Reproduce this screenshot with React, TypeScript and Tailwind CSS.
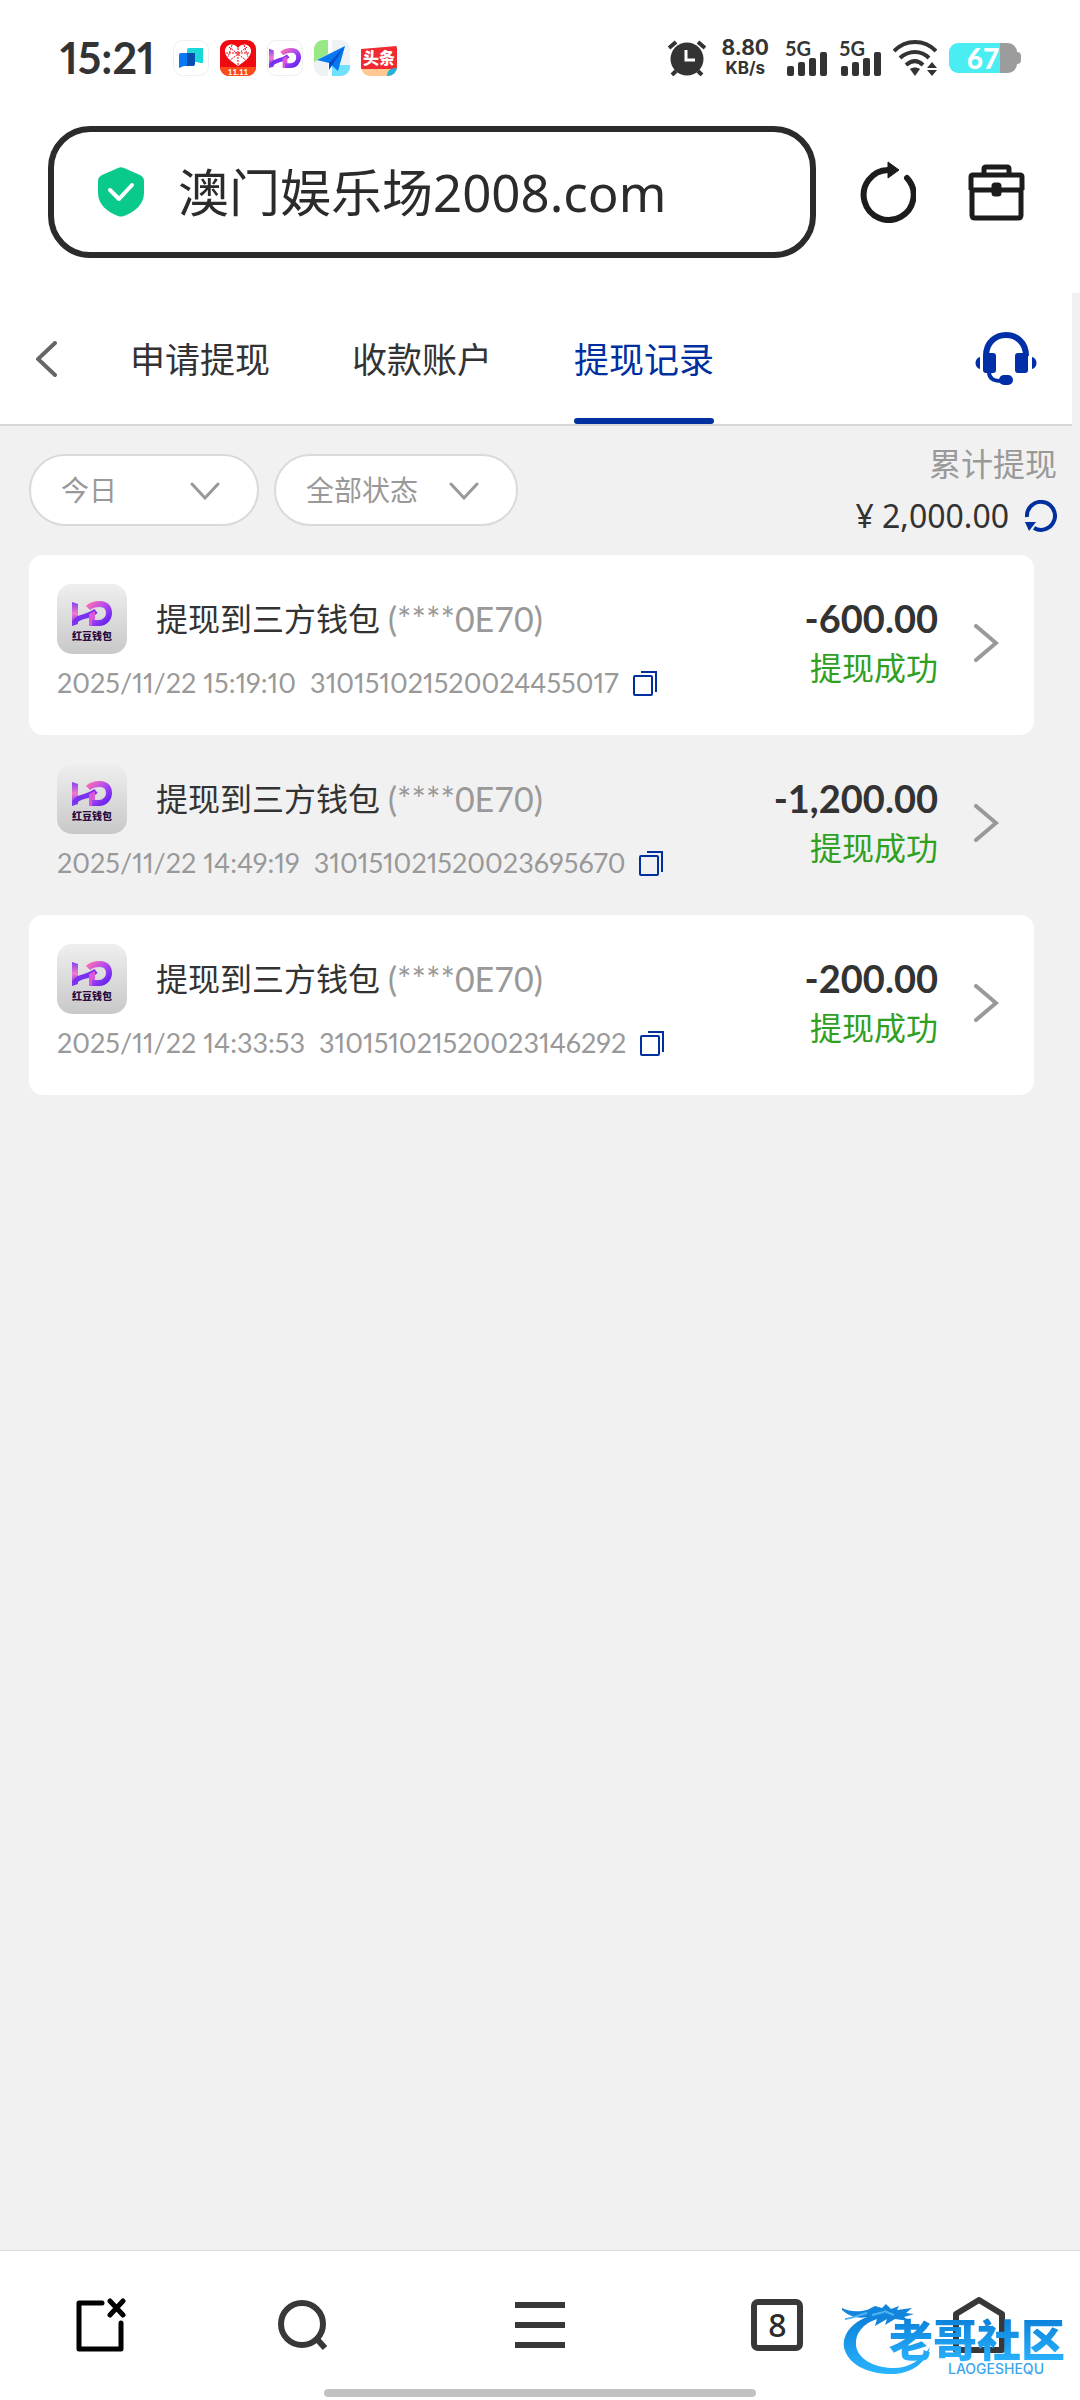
import React from 'react';

interface WithdrawRecord {
  id: string;
  time: string;
  amount: string;
}

const records: WithdrawRecord[] = [
  { id: '310151021520024455017', time: '2025/11/22 15:19:10', amount: '-600.00' },
  { id: '310151021520023695670', time: '2025/11/22 14:49:19', amount: '-1,200.00' },
  { id: '310151021520023146292', time: '2025/11/22 14:33:53', amount: '-200.00' },
];

const tabs = ['申请提现', '收款账户', '提现记录'];

// HD wallet mark, shared by the status bar and the record rows
const HdMark: React.FC<{ className?: string }> = ({ className }) => (
  <svg viewBox="0 0 40 25" className={className} fill="none" aria-hidden="true">
    <defs>
      <linearGradient id="hdLeft" x1="0" y1="0" x2="0" y2="25" gradientUnits="userSpaceOnUse">
        <stop offset="0" stopColor="#7a3cf0" />
        <stop offset="0.5" stopColor="#f07ad0" />
        <stop offset="1" stopColor="#6a2cf0" />
      </linearGradient>
      <linearGradient id="hdRight" x1="16" y1="2" x2="36" y2="24" gradientUnits="userSpaceOnUse">
        <stop offset="0" stopColor="#ff6fae" />
        <stop offset="0.45" stopColor="#b04cf0" />
        <stop offset="1" stopColor="#5a1cf0" />
      </linearGradient>
    </defs>
    <path d="M0 1l6 2v20L0 25z" fill="url(#hdLeft)" />
    <path d="M2 22c4-8 14-5 22-12" stroke="#7a30f0" strokeWidth="5" />
    <path d="M17 13l6-3v15h-6z" fill="#d858d8" />
    <path d="M16 7c4-4 8-4 12-4 6 0 9 4 9 9s-4 10-10 10h-7" stroke="url(#hdRight)" strokeWidth="6" />
  </svg>
);

const StatusIcons: React.FC = () => (
  <div className="flex items-center gap-[11px]">
    <svg viewBox="0 0 36 36" className="size-9">
      <rect x="0.5" y="0.5" width="35" height="35" rx="9" fill="#fff" stroke="#eee" />
      <path d="M16 8h14v15h-3l-3-1h-8a2 2 0 0 1-2-2V10a2 2 0 0 1 2-2z" fill="#1bd8d8" />
      <path d="M8 13h13v11a2 2 0 0 1-2 2h-8l-5 2V15a2 2 0 0 1 2-2z" fill="#0a78f5" />
      <path d="M14 13h8v11a2 2 0 0 1-2 2h-6z" fill="#064fae" />
    </svg>
    <svg viewBox="0 0 36 36" className="size-9">
      <rect width="36" height="36" rx="9" fill="#ee0a10" />
      <path d="M0 27h36a9 9 0 0 1-9 9H9a9 9 0 0 1-9-9z" fill="#ff4a1a" />
      <path d="M18 26C9 20 5 16 5 11c0-7 9-9 13-3 4-6 13-4 13 3 0 5-4 9-13 15z" fill="#fff" />
      <path d="M9 7l18 14M27 7L9 21M18 8v17M6 13h24M12 5l-4 12M24 5l4 12" stroke="#ee0a10" strokeWidth="1" strokeDasharray="2 1" />
      <text x="18" y="35" textAnchor="middle" fontSize="8" fontWeight="700" fill="#fff" fontFamily="Lato">11.11</text>
    </svg>
    <div className="flex size-9 items-center justify-center rounded-[9px] border border-[#eee] bg-white">
      <HdMark className="w-8" />
    </div>
    <svg viewBox="0 0 36 36" className="size-9">
      <defs>
        <clipPath id="mapClip"><rect width="36" height="36" rx="9" /></clipPath>
      </defs>
      <g clipPath="url(#mapClip)">
        <rect width="36" height="36" fill="#eef2f4" />
        <path d="M0 0h14v14L0 22z" fill="#98e888" />
        <path d="M18 36V25h18v11z" fill="#70e0ff" />
        <path d="M14 0h4v36h-4z" fill="#fff" />
        <path d="M31 6L3 20l12 3 9 8z" fill="#0878f0" />
        <path d="M31 6L15 23v7z" fill="#0450c8" />
      </g>
    </svg>
    <svg viewBox="0 0 36 36" className="size-9">
      <defs>
        <clipPath id="newsClip"><rect width="36" height="36" rx="9" /></clipPath>
      </defs>
      <g clipPath="url(#newsClip)">
        <rect width="36" height="36" fill="#fff" />
        <path d="M0 9l36-3v23H0z" fill="#f02a30" />
        <path d="M0 29h36v7H0z" fill="#ffc890" />
        <path d="M26 36c0-6 4-8 10-8v8z" fill="#20b0d8" />
      </g>
      <text x="18" y="24" textAnchor="middle" fontSize="16" fontWeight="900" fill="#fff" fontFamily="Noto Sans CJK SC">头条</text>
    </svg>
  </div>
);

const Signal: React.FC = () => (
  <div className="flex flex-col">
    <span className="text-[20px] leading-4 font-bold">5G</span>
    <svg viewBox="0 0 42 24" className="-mt-1 h-6 w-[42px]" fill="#333">
      <rect x="2" y="14" width="7" height="10" rx="2" />
      <rect x="13" y="10" width="7" height="14" rx="2" />
      <rect x="24" y="6" width="7" height="18" rx="2" />
      <rect x="35" y="0" width="7" height="24" rx="2" />
    </svg>
  </div>
);

const StatusBar: React.FC = () => (
  <div className="flex items-center justify-between py-10 pr-[59px] pl-[60px] text-[#333]">
    <div className="flex h-9 items-center gap-[18px]">
      <span className="text-[43px] leading-9 font-bold proportional-nums">15:21</span>
      <StatusIcons />
    </div>
    <div className="flex h-9 items-center gap-3">
      <svg viewBox="0 0 38 36" className="h-9 w-[38px]">
        <circle cx="19" cy="19" r="16.500" fill="#333" />
        <path d="M1 8l7-6M37 8l-7-6M8 31l-4 4M30 31l4 4" stroke="#333" strokeWidth="4" />
        <path d="M18 10v10h9" stroke="#fff" strokeWidth="3" fill="none" />
      </svg>
      <div className="flex flex-col items-center px-1 text-center font-['Inter'] font-bold">
        <span className="text-[21px] leading-5">8.80</span>
        <span className="text-[17px] leading-5">KB/s</span>
      </div>
      <Signal />
      <Signal />
      <svg viewBox="0 0 44 36" className="h-9 w-11" fill="none" stroke="#333" strokeWidth="4">
        <path d="M1 11c12-12 30-12 42 0M7 18c9-8 21-8 29 0M13 25c6-5 12-5 17 0" />
        <path d="M17 29c3-2 7-2 10 0l-5 7z" fill="#333" stroke="none" />
        <path d="M39 22l5 6H34zM39 36l5-6H34z" fill="#333" stroke="none" />
      </svg>
      <div className="flex items-center">
        <div className="flex h-[30px] w-[68px] items-center justify-center rounded-[9px] bg-[linear-gradient(90deg,#4aeef2_75%,#9c9c9c_75%)] text-[28px] leading-[30px] font-black text-white">
          67
        </div>
        <div className="h-3 w-1 rounded-r-sm bg-[#9c9c9c]" />
      </div>
    </div>
  </div>
);

const AddressBar: React.FC = () => (
  <div className="mt-[10px] mb-[35px] flex items-center pr-[55px] pl-12">
    <div className="flex h-[132px] min-w-0 flex-1 items-center gap-[34px] rounded-[42px] border-6 border-[#2b2b2b] pl-11">
      <svg viewBox="0 0 46 50" className="h-[50px] w-[46px] shrink-0">
        <path d="M20 1q3-1.500 6 0l16 7q4 2 4 6v12c0 11-9 19-20 23q-3 1-6 0C9 45 0 37 0 26V14q0-4 4-6z" fill="#0ac98c" />
        <path d="M12 23l9 9 13-14" stroke="#fff" strokeWidth="4" strokeLinecap="round" strokeLinejoin="round" fill="none" />
      </svg>
      <input
        type="text"
        aria-label="网址"
        defaultValue="澳门娱乐场2008.com"
        className="min-w-0 flex-1 bg-transparent font-['Noto_Sans','Noto_Sans_CJK_SC',sans-serif] text-[51px] leading-[72px] text-[#2b2b2b] outline-none"
      />
    </div>
    <button type="button" aria-label="刷新" className="ml-11">
      <svg viewBox="0 0 56 62" className="h-[62px] w-14" fill="none">
        <path d="M47 17A25 25 0 1 1 28 9" stroke="#1c1c1c" strokeWidth="6" strokeLinecap="round" />
        <path d="M28 1l11 8-11 8z" fill="#1c1c1c" stroke="#1c1c1c" strokeLinejoin="round" />
      </svg>
    </button>
    <button type="button" aria-label="工具箱" className="ml-[52px]">
      <svg viewBox="0 0 57 57" className="size-[57px]" fill="none" stroke="#1c1c1c" strokeWidth="5" strokeLinejoin="round">
        <path d="M16 11V5q0-2 2-2h21q2 0 2 2v6M3 26V13q0-2 2-2h47q2 0 2 2v13M3 26h51M4 26v25q0 3 3 3h43q3 0 3-3V26" />
        <rect x="26" y="21" width="5" height="9" rx="1" fill="#1c1c1c" />
      </svg>
    </button>
  </div>
);

const PageHeader: React.FC = () => (
  <header className="mr-2 flex h-[133px] items-stretch border-b-2 border-[#d8d8d8] bg-white pr-[35px] pl-[36px]">
    <button type="button" aria-label="返回">
      <svg viewBox="0 0 21 36" className="h-9 w-[21px]" fill="none" stroke="#666" strokeWidth="4" strokeLinecap="round">
        <path d="M19 2L2 18l17 16" />
      </svg>
    </button>
    <nav className="ml-[73px] flex flex-1 gap-[82px]">
      {tabs.map((tab) => (
        <a
          key={tab}
          href="#"
          className={`relative flex items-center text-[35px] leading-[50px] ${tab === '提现记录' ? 'text-[#002f9f]' : 'text-[#333]'}`}
        >
          {tab}
          {tab === '提现记录' && <span className="absolute inset-x-0 bottom-0 h-[6px] rounded-full bg-[#002f9f]" />}
        </a>
      ))}
    </nav>
    <button type="button" aria-label="客服">
      <svg viewBox="0 0 62 54" className="h-[54px] w-[62px]" fill="#002fa7">
        <path d="M11 24c0-28 40-28 40 0" fill="none" stroke="#002fa7" strokeWidth="6" />
        <rect x="8" y="21" width="13" height="20" rx="3" />
        <rect x="40" y="21" width="13" height="20" rx="3" />
        <path d="M5 25v12c-6-1-6-11 0-12zM57 25v12c6-1 6-11 0-12z" />
        <path d="M14 40c0 7 5 9 13 9" fill="none" stroke="#002fa7" strokeWidth="4" />
        <rect x="24" y="43" width="14" height="10" rx="5" />
      </svg>
    </button>
  </header>
);

const FilterSelect: React.FC<{ label: string; value: string; width: string }> = ({ label, value, width }) => (
  <div className={`relative ${width}`}>
    <select
      aria-label={label}
      defaultValue={value}
      className="h-[72px] w-full appearance-none rounded-full border-2 border-[#dadada] bg-white pl-[30px] text-[28px] text-[#999] outline-none"
    >
      <option value={value}>{value}</option>
    </select>
    <svg viewBox="0 0 30 18" className="pointer-events-none absolute top-7 right-[39px] h-[18px] w-[30px]" fill="none" stroke="#999" strokeWidth="3" strokeLinecap="round">
      <path d="M2 2l13 14L28 2" />
    </svg>
  </div>
);

const Filters: React.FC = () => (
  <section className="mr-2 flex items-center gap-[15px] pt-3 pr-[15px] pb-[13px] pl-[29px]">
    <FilterSelect label="日期" value="今日" width="w-[230px]" />
    <FilterSelect label="状态" value="全部状态" width="w-[244px]" />
    <div className="ml-auto text-right">
      <p className="text-[32px] leading-[52px] text-[#999]">累计提现</p>
      <div className="flex items-center justify-end gap-4">
        <span className="font-['Noto_Sans'] text-[32px] leading-[52px] text-[#333]">¥ 2,000.00</span>
        <button type="button" aria-label="刷新金额">
          <svg viewBox="0 0 32 32" className="size-8" fill="none">
            <path d="M2 17A14 14 0 1 1 9 28" stroke="#002f9f" strokeWidth="4" />
            <path d="M0 22h11l-7 9z" fill="#002f9f" />
          </svg>
        </button>
      </div>
    </div>
  </section>
);

const RecordCard: React.FC<{ record: WithdrawRecord; striped: boolean }> = ({ record, striped }) => (
  <li className={`flex items-center rounded-[14px] pt-[29px] pr-[35px] pb-[33px] pl-7 ${striped ? 'bg-white' : ''}`}>
    <div className="flex flex-1 flex-col gap-[14px] pb-1">
      <div className="flex items-center">
        <div className="flex size-[70px] flex-col items-center justify-center gap-1 rounded-[15px] bg-linear-to-b from-[#efefef] to-[#c8c8c8] pt-1">
          <HdMark className="w-10" />
          <span className="text-[10px] leading-[12px] font-black text-[#2a0a40]">红豆钱包</span>
        </div>
        <h3 className="ml-[29px] text-[32px] leading-[46px] text-[#333]">提现到三方钱包</h3>
        <span className="ml-2 text-[34px] leading-[46px] text-[#999]">(****0E70)</span>
      </div>
      <div className="flex items-center gap-[14px] text-[27px] leading-[30px] text-[#999] proportional-nums">
        <time>{record.time}</time>
        <span>{record.id}</span>
        <button type="button" aria-label="复制">
          <svg viewBox="0 0 24 26" className="h-[26px] w-6" fill="none" stroke="#002f9f" strokeWidth="2">
            <rect x="1" y="6" width="18" height="19" rx="1" />
            <path d="M8 2h15v20" />
          </svg>
        </button>
      </div>
    </div>
    <div className="text-right">
      <p className="text-[38px] leading-[50px] font-bold text-[#333]">{record.amount}</p>
      <p className="text-[32px] leading-[50px] text-[#2fa01f]">提现成功</p>
    </div>
    <button type="button" aria-label="详情" className="ml-9">
      <svg viewBox="0 0 25 38" className="h-[38px] w-[25px]" fill="none" stroke="#999" strokeWidth="4" strokeLinecap="round">
        <path d="M2 2l20 17L2 36" />
      </svg>
    </button>
  </li>
);

const Watermark: React.FC = () => (
  <div className="pointer-events-none absolute top-[52px] right-[15px] h-[72px] w-[225px]">
    <svg viewBox="0 0 225 72" className="absolute inset-0 size-full">
      <defs>
        <linearGradient id="dragon" x1="0" y1="0" x2="0" y2="1">
          <stop offset="0" stopColor="#0a7fd8" />
          <stop offset="1" stopColor="#2ab4ff" />
        </linearGradient>
      </defs>
      <path d="M34 12C12 17 2 32 4 44c3 17 24 28 50 27 18-1 32-11 36-27-9 14-22 21-36 21C33 65 17 55 16 42c-1-11 6-21 22-27z" fill="url(#dragon)" />
      <path d="M2 5c8 4 16 4 25 2l8-4 7 2 4-4 5 5 8-3-2 4 15-2-6 5 8 1-10 3 5 4-14-2-10 6 2-6-12 7 2-7-15 6 5-8c-8 2-17 0-25-7z" fill="#1284dc" />
      <path d="M5 16c8-1 14-4 22-6M44 8l10 4M32 12l12-3" stroke="#4cb4f4" strokeWidth="2" fill="none" />
    </svg>
    <span className="absolute top-[13px] right-0 bg-linear-to-b from-[#0a7fd8] to-[#2ab4ff] bg-clip-text text-[44px] leading-[48px] font-black whitespace-nowrap text-transparent">老哥社区</span>
    <span className="absolute top-[58px] right-[21px] font-['Inter'] text-[14px] leading-4 font-medium text-[#3ba6ee]">LAOGESHEQU</span>
  </div>
);

const BottomNav: React.FC = () => (
  <footer className="relative border-t border-[#dcdcdc] bg-white">
    <nav className="grid h-[138px] grid-cols-[17fr_17fr_23fr_17fr_17fr] items-center justify-items-center pt-[18px] pb-2">
      <button type="button" aria-label="关闭页面">
        <svg viewBox="0 0 50 54" className="h-[54px] w-[50px]" fill="none" stroke="#000" strokeWidth="5" strokeLinecap="round" strokeLinejoin="round">
          <path d="M26 5H3v46h42V25" />
          <path d="M34 3l13 14M47 3L34 17" />
        </svg>
      </button>
      <button type="button" aria-label="搜索">
        <svg viewBox="0 0 50 50" className="size-[50px]" fill="none" stroke="#383838" strokeWidth="6">
          <circle cx="24" cy="24" r="21" />
          <path d="M37 37l10 11" />
        </svg>
      </button>
      <button type="button" aria-label="菜单">
        <svg viewBox="0 0 50 48" className="h-12 w-[50px]" stroke="#383838" strokeWidth="6">
          <path d="M0 4h50M0 24h50M0 44h50" />
        </svg>
      </button>
      <button
        type="button"
        aria-label="多窗口"
        className="flex size-[52px] items-center justify-center rounded-[7px] border-6 border-[#383838] font-['Noto_Sans'] text-[32px] leading-[32px] font-medium text-[#2b2b2b]"
      >
        8
      </button>
      <button type="button" aria-label="主页">
        <svg viewBox="0 0 52 56" className="h-14 w-[52px]" fill="none" stroke="#383838" strokeWidth="6" strokeLinejoin="round">
          <path d="M3 17L26 3l23 14v36H3z" />
        </svg>
      </button>
    </nav>
    <div className="mx-auto h-2 w-2/5 rounded-full bg-[#c2c2c2]" />
    <div className="h-[3px]" />
    <Watermark />
  </footer>
);

const App: React.FC = () => (
  <div className="flex min-h-screen flex-col bg-white font-['Lato','Noto_Sans_CJK_SC',sans-serif]">
    <StatusBar />
    <AddressBar />
    <main className="flex-1 bg-[#f1f1f1]">
      <PageHeader />
      <Filters />
      <ul className="mr-[46px] ml-[29px]">
        {records.map((record, index) => (
          <RecordCard key={record.id} record={record} striped={index % 2 === 0} />
        ))}
      </ul>
    </main>
    <BottomNav />
  </div>
);

export default App;
